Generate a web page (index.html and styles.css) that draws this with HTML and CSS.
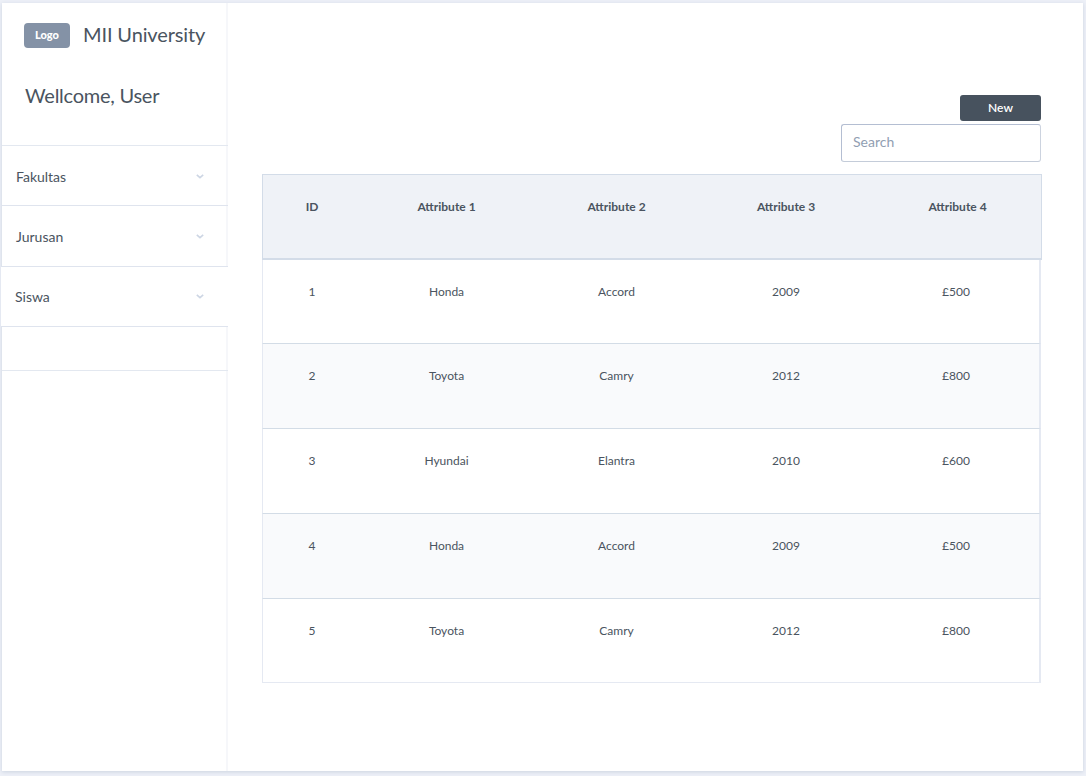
FILE: index.html
```html
<!DOCTYPE html>
<html lang="en">
<head>
<meta charset="utf-8">
<title>MII University</title>
<link rel="stylesheet" href="styles.css">
</head>
<body>
<div class="app">
  <aside class="sidebar">
    <header class="brand">
      <span class="logo">Logo</span>
      <h1 class="brand-name">MII University</h1>
    </header>
    <p class="welcome">Wellcome, User</p>
    <nav class="menu">
      <a class="menu-item"><span class="menu-label">Fakultas</span><svg class="chevron" viewBox="0 0 8 5"><path d="M.8 .9L4 3.7L7.2 .9"/></svg></a>
      <a class="menu-item"><span class="menu-label">Jurusan</span><svg class="chevron" viewBox="0 0 8 5"><path d="M.8 .9L4 3.7L7.2 .9"/></svg></a>
      <a class="menu-item menu-item-wide"><span class="menu-label">Siswa</span><svg class="chevron" viewBox="0 0 8 5"><path d="M.8 .9L4 3.7L7.2 .9"/></svg></a>
      <div class="menu-empty"></div>
    </nav>
  </aside>
  <main class="content">
    <div class="toolbar">
      <button class="new-button">New</button>
      <input class="search" type="text" placeholder="Search">
    </div>
    <div class="table">
      <div class="row head"><span>ID</span><span>Attribute 1</span><span>Attribute 2</span><span>Attribute 3</span><span class="last-head">Attribute 4</span></div>
      <div class="row"><span>1</span><span>Honda</span><span>Accord</span><span>2009</span><span>£500</span></div>
      <div class="row alt"><span>2</span><span>Toyota</span><span>Camry</span><span>2012</span><span>£800</span></div>
      <div class="row"><span>3</span><span>Hyundai</span><span>Elantra</span><span>2010</span><span>£600</span></div>
      <div class="row alt"><span>4</span><span>Honda</span><span>Accord</span><span>2009</span><span>£500</span></div>
      <div class="row"><span>5</span><span>Toyota</span><span>Camry</span><span>2012</span><span>£800</span></div>
    </div>
  </main>
</div>
</body>
</html>
```
FILE: styles.css
```css
* { box-sizing: border-box; }
body {
  margin: 0;
  height: 776px;
  overflow: hidden;
  padding: 3px 3px 5px 2px;
  background: #edf0f7;
  font-family: Lato, "Liberation Sans", sans-serif;
  color: #4a5460;
}
.app {
  display: flex;
  height: 768px;
  background: #fff;
  box-shadow: 0 1px 4px #cbd3e0;
}
.sidebar { width: 226px; border-right: 2px solid #f6f7fa; }
.brand { display: flex; align-items: center; height: 65px; padding-left: 22px; }
.logo {
  width: 46px;
  height: 25px;
  border-radius: 4px;
  background: #8492a6;
  color: #fff;
  font-size: 11px;
  font-weight: 900;
  line-height: 24px;
  text-align: center;
}
.brand-name { margin: 0 0 3px 13px; font-size: 20px; font-weight: 400; line-height: 24px; letter-spacing: -.13px; }
.welcome { height: 77px; margin: 0; padding: 15px 0 0 23px; font-size: 20px; line-height: 24px; letter-spacing: -.25px; }
.menu { border-top: 1px solid #e3e8f0; width: 226px; }
.menu-item {
  display: flex;
  align-items: center;
  justify-content: space-between;
  height: 60.33px;
  padding: 2px 24px 0 14px;
  border-bottom: 1px solid #dfe4ee;
  font-size: 14px;
}
.menu-item-wide { margin-left: -1px; padding-top: 1px; background: #fff; }
.menu-empty { height: 44px; border-bottom: 1px solid #e3e8f0; }
.chevron { width: 8px; height: 5px; fill: none; stroke: #cdd6e4; stroke-width: 1.6; }
.content { flex: 1; padding: 92px 43px 0 34px; }
.toolbar { display: flex; flex-direction: column; align-items: flex-end; gap: 3px; padding-right: 1px; }
.new-button {
  width: 81px;
  height: 26px;
  padding: 0;
  border: 0;
  border-radius: 3px;
  background: #47525e;
  color: #fff;
  font: 600 12px/24px Lato, sans-serif;
}
.search {
  width: 200px;
  height: 38px;
  padding: 0 11px 3px;
  border: 1px solid #b4bed2;
  border-right-color: #ccd3df;
  border-bottom-color: #c4ccd9;
  border-radius: 3px;
  outline: 0;
  background: #fff;
  font: 400 14px/18px Lato, sans-serif;
}
.search::placeholder { color: #919eb2; opacity: 1; }
.table { margin-top: 12px; font-size: 12px; }
.row {
  display: grid;
  grid-template-columns: 98px 171px 169px 170px 170px;
  width: 779px;
  height: 84.75px;
  padding-top: 24px;
  border: solid #e5e9f2;
  border-width: 0 2px 0 1px;
  border-bottom: 1px solid #d3dce6;
  line-height: 16px;
  text-align: center;
}
.row.alt { background: #f9fafc; }
.row.head {
  width: 780px;
  height: 85.5px;
  border: 1px solid #d3dce8;
  border-bottom-width: 2px;
  background: #eff2f7;
  font-weight: 700;
}
.last-head { padding-left: 3px; }
.row:last-child { border-bottom-color: #e5e9f2; }
```
